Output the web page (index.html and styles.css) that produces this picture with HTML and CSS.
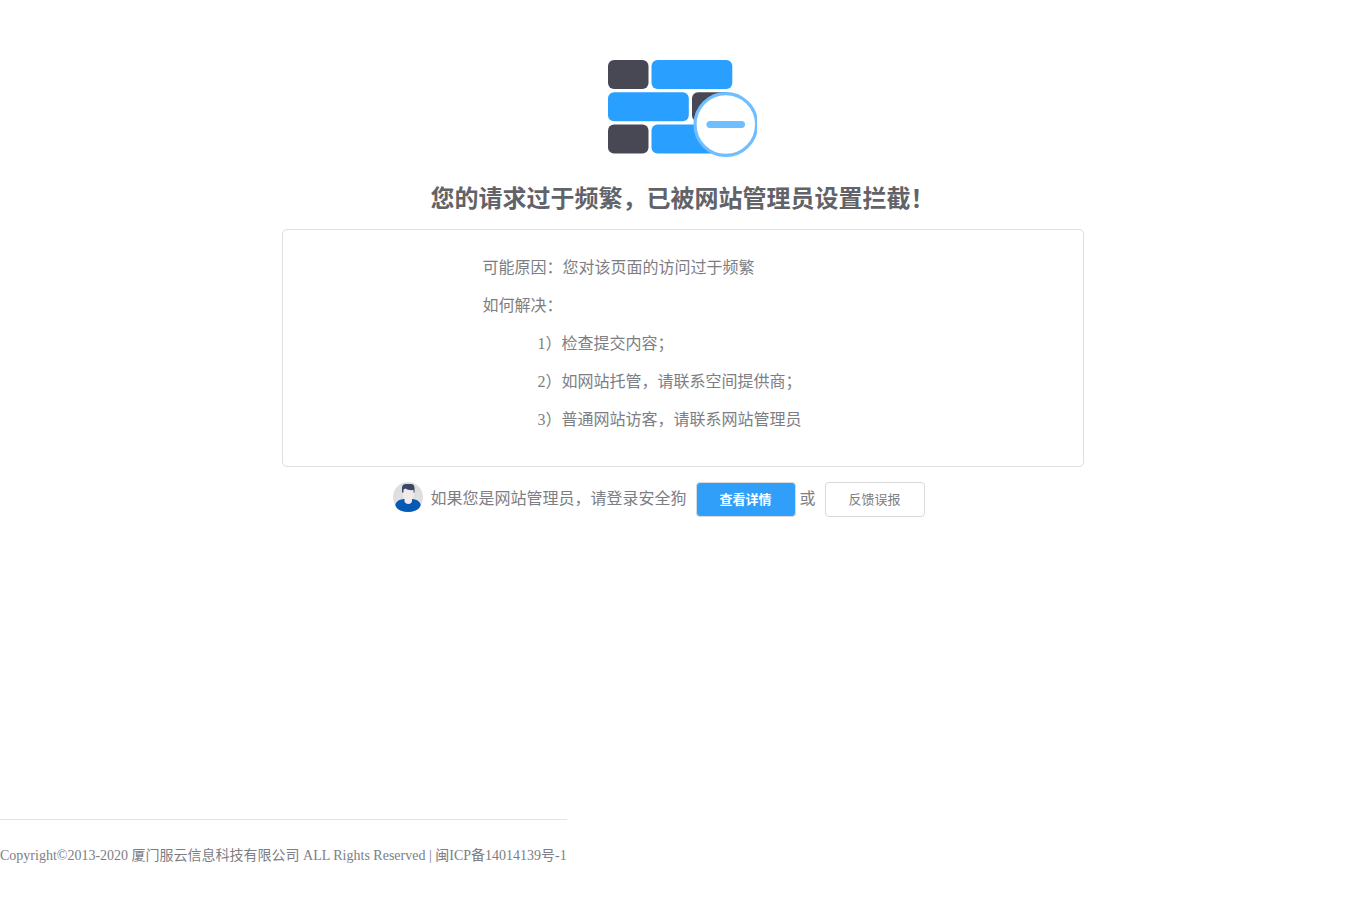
FILE: index.html
```html
<!DOCTYPE html>
<html lang="zh-CN">
<head>
<meta charset="utf-8">
<meta name="viewport" content="width=device-width, initial-scale=1">
<title>网站防火墙</title>
<link rel="stylesheet" href="styles.css">
</head>
<body>
<main class="main">
  <svg class="wall" viewBox="0 0 149 97" aria-hidden="true">
    <g fill="#484855">
      <rect x="0" y="0" width="40.500" height="29" rx="6"/>
      <rect x="84" y="32.300" width="40.500" height="29" rx="6"/>
      <rect x="0" y="64.500" width="40.500" height="29" rx="6"/>
    </g>
    <g fill="#299fff">
      <rect x="43.500" y="0" width="80.800" height="29" rx="6"/>
      <rect x="0" y="32.300" width="80.800" height="29" rx="6"/>
      <rect x="43.500" y="64.500" width="80.800" height="29" rx="6"/>
    </g>
    <circle cx="117.800" cy="64.500" r="30.800" fill="#fff" stroke="#6fbeff" stroke-width="3.200"/>
    <rect x="98.500" y="61" width="38.500" height="7" rx="3.500" fill="#6fbeff"/>
  </svg>
  <h1 class="title">您的请求过于频繁，已被网站管理员设置拦截！</h1>
  <section class="reason">
    <p class="line">可能原因：您对该页面的访问过于频繁</p>
    <p class="line">如何解决：</p>
    <ul class="steps">
      <li class="line">1）检查提交内容；</li>
      <li class="line">2）如网站托管，请联系空间提供商；</li>
      <li class="line">3）普通网站访客，请联系网站管理员</li>
    </ul>
  </section>
  <div class="admin">
    <svg class="avatar" viewBox="0 0 30 30" aria-hidden="true">
      <circle cx="15" cy="15" r="15" fill="#dfdfdf"/>
      <path d="M2.300 23C3 19 7 17.300 11 17h8c4 .3 8 2 8.700 6C27 27.500 21 30 15 30S3 27.500 2.300 23z" fill="#0559b5"/>
      <path d="M10 7h11v5c0 2-.8 4-2 5v2c0 1.800-2 3-3.700 3S11.500 20.800 11.500 19v-2c-1-1-1.500-3-1.500-5z" fill="#f1eaec"/>
      <path d="M9 10.500V5.500C9 3 11 2 13 2h5c2.500 0 3.500 2 3.500 4v4.500H20.500V8c-2 .3-6 .3-8-1.500L10.500 7.500v3z" fill="#3b4566"/>
    </svg>
    <span class="hint">如果您是网站管理员，请登录安全狗</span>
    <button class="btn btn-primary" type="button">查看详情</button>
    <span class="or">或</span>
    <button class="btn" type="button">反馈误报</button>
  </div>
</main>
<footer class="footer">Copyright©2013-2020 厦门服云信息科技有限公司 ALL Rights Reserved | 闽ICP备14014139号-1</footer>
</body>
</html>
```
FILE: styles.css
```css
* {
  box-sizing: border-box;
}

body {
  display: flex;
  flex-direction: column;
  min-height: 100vh;
  margin: 0;
  background: #fff;
  color: #7d7e84;
  font-family: "Liberation Serif", "Noto Sans CJK SC", serif;
  font-size: 16px;
}

.main {
  display: flex;
  flex-direction: column;
  align-items: center;
  padding: 60px 16px 24px;
}

.wall {
  display: block;
  width: 149px;
  height: 97px;
}

.title {
  margin: 24px 0 12px;
  color: #626368;
  font-size: 24px;
  font-weight: bold;
  line-height: 36px;
}

.reason {
  width: 100%;
  max-width: 802px;
  padding: 19px 24px 27px 200px;
  border: 1px solid #dedfe0;
  border-radius: 5px;
}

.line {
  margin: 0;
  line-height: 38px;
}

.steps {
  margin: 0;
  padding: 0 0 0 55px;
  list-style: none;
}

.admin {
  display: flex;
  align-items: flex-start;
  width: 100%;
  max-width: 580px;
  margin-top: 15px;
  line-height: 34px;
}

.avatar {
  flex: none;
  width: 30px;
  height: 30px;
  margin-right: 8px;
}

.hint {
  margin-right: 9px;
}

.or {
  margin: 0 9px 0 4px;
}

.btn {
  width: 100px;
  height: 35px;
  padding: 0 0 3px;
  border: 1px solid #d9dadc;
  border-radius: 4px;
  background: #fff;
  color: #7d7e84;
  font-family: "Noto Sans CJK SC", sans-serif;
  font-size: 13px;
  cursor: pointer;
}

.btn-primary {
  background: #2f9ffa;
  color: #fff;
  font-weight: bold;
}

.footer {
  align-self: flex-start;
  margin: auto 0 8px;
  border-top: 1px solid #e2e3e6;
  font-size: 14px;
  line-height: 72px;
}
```
